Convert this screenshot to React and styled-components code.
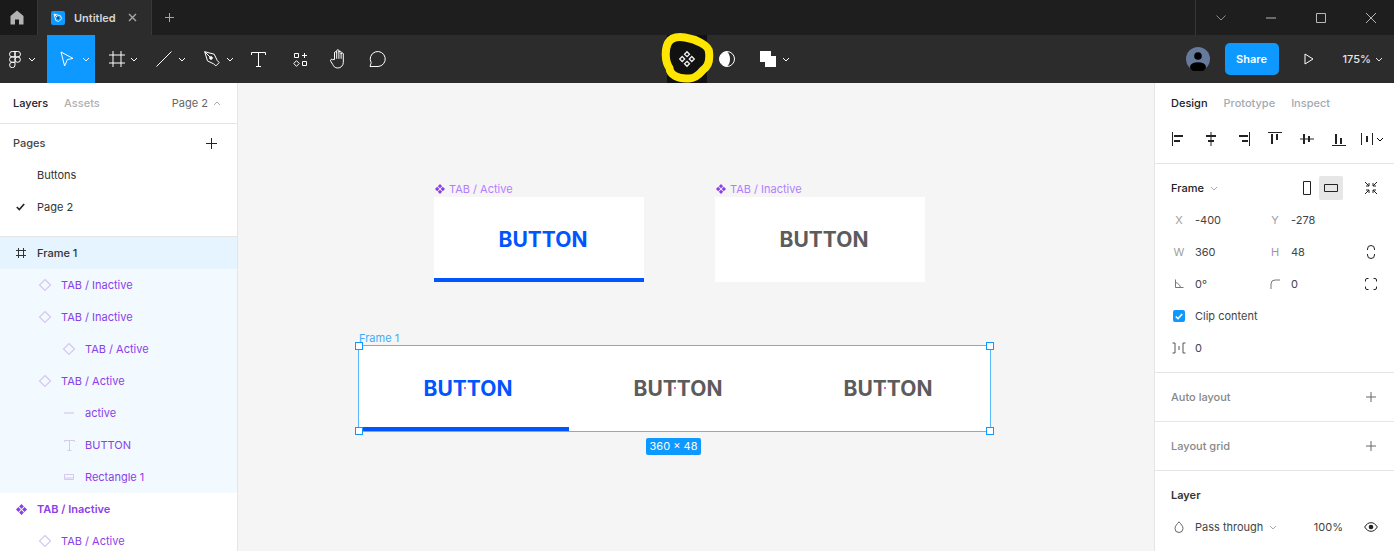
import styled, { createGlobalStyle } from "styled-components";

const GlobalStyle = createGlobalStyle`
  html, body {
    margin: 0;
    height: 100%;
    overflow: hidden;
    background: #f5f5f5;
    font-family: Inter, "Liberation Sans", sans-serif;
  }
  * { box-sizing: border-box; }
`;

// icons
const Svg = ({ s = 16, w, h, children, stroke = "currentColor", sw = 1 }) => (
  <svg
    width={w || s}
    height={h || s}
    viewBox={`0 0 ${w || s} ${h || s}`}
    fill="none"
    stroke={stroke}
    strokeWidth={sw}
    style={{ display: "block", flex: "none" }}
  >
    {children}
  </svg>
);

const Chevron = ({ up }) => (
  <Svg w={8} h={5}>
    <path d={up ? "M1 4l3-3 3 3" : "M1 1l3 3 3-3"} />
  </Svg>
);

const HomeIcon = () => (
  <svg width="14" height="15" viewBox="0 0 14 15" fill="#b3b3b3" style={{ display: "block" }}>
    <path d="M7 0.5L13.5 6V14.5H9V9.5H5V14.5H0.5V6Z" />
  </svg>
);

const FigmaIcon = () => (
  <Svg w={12} h={17}>
    <path d="M6 .5H3.2a2.7 2.7 0 000 5.4H6zM6 .5h2.8a2.7 2.7 0 010 5.4H6zM6 5.9H3.2a2.7 2.7 0 000 5.4H6zM6 8.6a2.7 2.7 0 115.4 0 2.7 2.7 0 01-5.4 0zM6 11.3H3.2A2.7 2.7 0 106 14z" />
  </Svg>
);

const MoveIcon = () => (
  <Svg w={14} h={16}>
    <path d="M1 1l12 6.4-5.6 1.2L4.6 15z" />
  </Svg>
);

const FrameIcon = ({ size = 16 }) => (
  <Svg s={size}>
    <path d={size === 16 ? "M4 0v16M12 0v16M0 4h16M0 12h16" : "M3.5 1v10M8.5 1v10M1 3.5h10M1 8.5h10"} />
  </Svg>
);

const LineIcon = () => (
  <Svg s={16}>
    <path d="M.5 15.5L15.5.5" />
  </Svg>
);

const PenIcon = () => (
  <Svg s={16}>
    <path d="M.7.7l9.5 2.5 3 6.2 2 2.2-3.3 3.3-2.2-2-6.2-3zM.7.7l5.6 5.6" />
    <circle cx="7" cy="7" r="1.3" fill="currentColor" />
  </Svg>
);

const TextIcon = ({ light }) => (
  <Svg s={light ? 11 : 15}>
    {light ? <path d="M.5 2V.5h10V2M5.5.5v10M3.5 10.5h4" /> : <path d="M.5 3V.5h14V3M7.5.5v14M5 14.5h5" />}
  </Svg>
);

const ResourcesIcon = () => (
  <Svg s={15}>
    <path d="M1.5 1.5h4v4h-4zM9.5 9.5h4v4h-4zM11.5 1v5M9 3.5h5M3.5 8.7l2.8 2.8-2.8 2.8-2.8-2.8z" />
  </Svg>
);

const HandIcon = () => (
  <Svg w={18} h={20}>
    <path d="M4.5 10.500V3.8a1.100 1.100 0 012.200 0V1.800a1.100 1.100 0 012.200 0v1.400a1.100 1.100 0 012.200 0V5a1.100 1.100 0 012.200 0v8.500a5.500 5.500 0 01-5.500 5.500c-3 0-4.300-1.700-5-3.500L.6 12a1.200 1.200 0 012-1.300zM6.700 3.800v6M8.900 2.500v7.300M11.100 4v5.800" />
  </Svg>
);

const CommentIcon = () => (
  <Svg s={18}>
    <path d="M1 16.500l1.200-3.800A7.500 7.500 0 119 16.500H1z" />
  </Svg>
);

const ComponentIcon = ({ color = "#f0f0f0" }) => (
  <Svg s={18} stroke={color} sw={1.3}>
    <path d="M9 1.700l2.500 2.500L9 6.700 6.500 4.200zM4.200 6.500l2.500 2.500-2.500 2.500L1.700 9zM13.800 6.500L16.300 9l-2.500 2.500L11.300 9zM9 11.300l2.500 2.500L9 16.300l-2.500-2.500z" />
  </Svg>
);

const SolidComponent = ({ size = 11, color = "#8a3fe8" }) => (
  <svg width={size} height={size} viewBox="0 0 11 11" fill={color} style={{ display: "block", flex: "none" }}>
    <path d="M5.5 0l2.400 2.400-2.400 2.400-2.400-2.400zM2.400 3.100l2.400 2.400-2.400 2.400L0 5.500zM8.600 3.100L11 5.500 8.600 7.900 6.200 5.500zM5.500 6.200l2.400 2.400L5.500 11 3.100 8.600z" />
  </svg>
);

const MaskIcon = () => (
  <svg width="16" height="16" viewBox="0 0 16 16" style={{ display: "block" }}>
    <circle cx="8" cy="8" r="7.5" fill="none" stroke="#fff" />
    <path d="M8 .5A7.500 7.500 0 008 15.500C10 13.500 11 11 11 8S10 2.500 8 .5z" fill="#fff" />
  </svg>
);

const BooleanIcon = () => (
  <svg width="16" height="16" viewBox="0 0 16 16" fill="#fff" style={{ display: "block" }}>
    <path d="M0 0h11v5h5v11H5v-5H0z" />
  </svg>
);

const AvatarIcon = () => (
  <svg width="24" height="24" viewBox="0 0 24 24" style={{ display: "block" }}>
    <circle cx="12" cy="12" r="12" fill="#667a9c" />
    <circle cx="12" cy="9" r="3.8" fill="#000" />
    <ellipse cx="12" cy="20" rx="8" ry="4.800" fill="#000" />
  </svg>
);

const PlayIcon = () => (
  <Svg w={10} h={12} stroke="#fff">
    <path d="M1 1v10l8-5z" />
  </Svg>
);

const Diamond = () => (
  <Svg s={14} stroke="#d6c8ef" sw={1.2}>
    <path d="M7 1.500L12.500 7 7 12.500 1.500 7z" />
  </Svg>
);

const LineLayer = () => (
  <Svg s={14} stroke="#d6c8ef" sw={1.2}>
    <path d="M2 7h10" />
  </Svg>
);

const RectLayer = () => (
  <Svg s={14} stroke="#d6c8ef" sw={1}>
    <path d="M2.500 4.500h9v5h-9z" />
    <path d="M2.500 8h9" />
  </Svg>
);

const PlusIcon = ({ color = "#333", size = 13 }) => (
  <Svg s={size} stroke={color}>
    <path d={`M${size / 2} 1v${size - 2}M1 ${size / 2}h${size - 2}`} />
  </Svg>
);

const Align = ({ line, bars }) => (
  <Svg s={14} stroke="#222">
    <path d={line} />
    <path d={bars} strokeWidth="2" />
  </Svg>
);

const alignIcons = [
  { line: "M.5 0v14", bars: "M2 4h9M2 9h6" },
  { line: "M7 0v14", bars: "M2 4h10M4 9h6" },
  { line: "M13.500 0v14", bars: "M3 4h9M6 9h6" },
  { line: "M0 .5h14", bars: "M4 2v10M9 2v6" },
  { line: "M0 7h14", bars: "M4 2v10M9 4v6" },
  { line: "M0 13.500h14", bars: "M4 2v10M9 6v6" },
];

// page structure
const App = () => (
  <Page>
    <GlobalStyle />
    <TabBar>
      <HomeTab>
        <HomeIcon />
      </HomeTab>
      <FileTab>
        <FileBadge>
          <svg width="12" height="12" viewBox="0 0 12 12" fill="none" stroke="#e8f5ff" strokeWidth="1">
            <path d="M2 2l6.500 1.800 1 3-2.700 2.700-3-1zM2 2l3.500 3.500" />
            <circle cx="6" cy="6" r="1" fill="#12324a" stroke="none" />
          </svg>
        </FileBadge>
        <FileName>Untitled</FileName>
        <CloseSlot>
          <Svg s={9} stroke="#a8a8a8" sw={1.4}>
            <path d="M1 1l7 7M8 1L1 8" />
          </Svg>
        </CloseSlot>
      </FileTab>
      <NewTab>
        <PlusIcon color="#a8a8a8" size={11} />
      </NewTab>
      <WindowControls>
        <WindowButton>
          <Svg w={10} h={6} stroke="#8c8c8c">
            <path d="M.5.5L5 5 9.500.5" />
          </Svg>
        </WindowButton>
        <WindowButton>
          <Svg w={10} h={2} stroke="#b8b8b8">
            <path d="M0 1h10" />
          </Svg>
        </WindowButton>
        <WindowButton>
          <Svg s={10} stroke="#b8b8b8">
            <path d="M.5.5h9v9h-9z" />
          </Svg>
        </WindowButton>
        <WindowButton>
          <Svg s={10} stroke="#b8b8b8">
            <path d="M0 0l10 10M10 0L0 10" />
          </Svg>
        </WindowButton>
      </WindowControls>
    </TabBar>

    <Toolbar>
      <ToolGroup>
        <MenuTool>
          <FigmaIcon />
          <Chevron />
        </MenuTool>
        <DropTool $active $gap={8}>
          <MoveIcon />
          <Chevron />
        </DropTool>
        <DropTool $pad={14} $gap={5}>
          <FrameIcon />
          <Chevron />
        </DropTool>
        <DropTool>
          <LineIcon />
          <Chevron />
        </DropTool>
        <DropTool>
          <PenIcon />
          <Chevron />
        </DropTool>
        <Tool $w={38}>
          <TextIcon />
        </Tool>
        <Tool $w={46}>
          <ResourcesIcon />
        </Tool>
        <Tool $w={32}>
          <HandIcon />
        </Tool>
        <Tool $w={46}>
          <CommentIcon />
        </Tool>
      </ToolGroup>

      <CenterTools>
        <ComponentTool>
          <Scribble width="54" height="52" viewBox="0 0 54 52">
            <path
              d="M24 4.500C34 6 48 12 48 19C49 27 48 33 42 37C37 43 33 46 27 45.500C17 46 9 42 8.500 35C3.500 28 4 16 7 10C10 4.500 17 3.500 24 4.500Z"
              fill="#111"
              stroke="#ffe600"
              strokeWidth="8"
              strokeLinejoin="round"
            />
          </Scribble>
          <ScribbleIcon>
            <ComponentIcon />
          </ScribbleIcon>
        </ComponentTool>
        <Tool $w={40}>
          <MaskIcon />
        </Tool>
        <BooleanTool>
          <BooleanIcon />
          <Chevron />
        </BooleanTool>
      </CenterTools>

      <RightTools>
        <AvatarIcon />
        <ShareButton>Share</ShareButton>
        <PlaySlot>
          <PlayIcon />
        </PlaySlot>
        <Zoom>
          175%
          <Chevron />
        </Zoom>
      </RightTools>
    </Toolbar>

    <Main>
      <LeftPanel>
        <PanelTabs>
          <PanelTab $on>Layers</PanelTab>
          <PanelTab>Assets</PanelTab>
          <PagePicker>
            Page 2
            <Chevron up />
          </PagePicker>
        </PanelTabs>
        <PagesBlock>
          <PagesHead>
            Pages
            <PlusIcon color="#222" />
          </PagesHead>
          <PageRow>
            <PageCheck />
            Buttons
          </PageRow>
          <PageRow>
            <PageCheck>
              <Svg w={9} h={8} stroke="#222" sw={1.6}>
                <path d="M.8 4l2.500 2.500L8.200 1" />
              </Svg>
            </PageCheck>
            Page 2
          </PageRow>
        </PagesBlock>
        <LayerList>
          <LayerRow $depth={0} $bg="#e5f4ff" $dark $weight={500}>
            <LayerIcon>
              <FrameIcon size={12} />
            </LayerIcon>
            Frame 1
          </LayerRow>
          {[
            ["TAB / Inactive", 1, <Diamond />],
            ["TAB / Inactive", 1, <Diamond />],
            ["TAB / Active", 2, <Diamond />],
            ["TAB / Active", 1, <Diamond />],
            ["active", 2, <LineLayer />],
            ["BUTTON", 2, <TextIcon light />],
            ["Rectangle 1", 2, <RectLayer />],
          ].map(([name, depth, icon], i) => (
            <LayerRow key={i} $depth={depth} $bg="#f2f9ff">
              <LayerIcon $muted>{icon}</LayerIcon>
              {name}
            </LayerRow>
          ))}
          <LayerRow $depth={0} $weight={600}>
            <LayerIcon>
              <SolidComponent />
            </LayerIcon>
            TAB / Inactive
          </LayerRow>
          <LayerRow $depth={1}>
            <LayerIcon>
              <Diamond />
            </LayerIcon>
            TAB / Active
          </LayerRow>
        </LayerList>
      </LeftPanel>

      <Canvas>
        <ComponentCard $left={196}>
          <CardLabel>
            <SolidComponent size={10} />
            TAB / Active
          </CardLabel>
          <ButtonCell $active>BUTTON</ButtonCell>
        </ComponentCard>
        <ComponentCard $left={477}>
          <CardLabel>
            <SolidComponent size={10} />
            TAB / Inactive
          </CardLabel>
          <ButtonCell>BUTTON</ButtonCell>
        </ComponentCard>

        <SelectedFrame>
          <FrameLabel>Frame 1</FrameLabel>
          <ButtonCell $active $inFrame>
            BUTTON
            <CenterDot />
          </ButtonCell>
          <ButtonCell $inFrame>
            BUTTON
            <CenterDot />
          </ButtonCell>
          <ButtonCell $inFrame>
            BUTTON
            <CenterDot />
          </ButtonCell>
          <Handle $x="left" $y="top" />
          <Handle $x="right" $y="top" />
          <Handle $x="left" $y="bottom" />
          <Handle $x="right" $y="bottom" />
          <SizeBadge>360 × 48</SizeBadge>
        </SelectedFrame>
      </Canvas>

      <RightPanel>
        <DesignTabs>
          <PanelTab $on>Design</PanelTab>
          <PanelTab $blueish>Prototype</PanelTab>
          <PanelTab $blueish>Inspect</PanelTab>
        </DesignTabs>
        <AlignRow>
          {alignIcons.map((icon, i) => (
            <AlignSlot key={i}>
              <Align line={icon.line} bars={icon.bars} />
            </AlignSlot>
          ))}
          <DistributeSlot>
            <Svg s={14} stroke="#222">
              <path d="M1.500 1v12M12.500 1v12" />
              <path d="M7 4v6" strokeWidth="2" />
            </Svg>
            <Chevron />
          </DistributeSlot>
        </AlignRow>
        <Section>
          <FrameRow>
            <FrameTitle>
              Frame
              <Chevron />
            </FrameTitle>
            <OrientSlot>
              <Svg w={8} h={14} stroke="#222">
                <path d="M.5.5h7v13h-7z" />
              </Svg>
            </OrientSlot>
            <OrientSlot $on>
              <Svg w={14} h={8} stroke="#222">
                <path d="M.5.5h13v7h-13z" />
              </Svg>
            </OrientSlot>
            <SideSlot $push>
              <Svg s={14} stroke="#222">
                <path d="M1 1l4 4M5 2v3H2M13 1L9 5M9 2v3h3M1 13l4-4M5 12V9H2M13 13L9 9M9 12V9h3" />
              </Svg>
            </SideSlot>
          </FrameRow>
          <FieldRow>
            <FieldTag>X</FieldTag>
            <FieldValue>-400</FieldValue>
            <FieldTag>Y</FieldTag>
            <FieldValue>-278</FieldValue>
          </FieldRow>
          <FieldRow>
            <FieldTag>W</FieldTag>
            <FieldValue>360</FieldValue>
            <FieldTag $pink>H</FieldTag>
            <FieldValue>48</FieldValue>
            <SideSlot>
              <Svg w={8} h={14} stroke="#222">
                <path d="M.5 5V4a3.500 3.500 0 017 0v1M.5 9v1a3.500 3.500 0 007 0V9" />
              </Svg>
            </SideSlot>
          </FieldRow>
          <FieldRow>
            <FieldTag>
              <Svg s={10} stroke="#777">
                <path d="M1.500.5v8h8M1.500 3.500C4 4 6 6 6.500 8.500" />
              </Svg>
            </FieldTag>
            <FieldValue>0°</FieldValue>
            <FieldTag>
              <Svg s={10} stroke="#777">
                <path d="M1 10V5a4 4 0 014-4h5" />
              </Svg>
            </FieldTag>
            <FieldValue>0</FieldValue>
            <SideSlot>
              <Svg s={12} stroke="#222">
                <path d="M.5 3.500V2A1.500 1.500 0 012 .5h1.500M8.500.5H10A1.500 1.500 0 0111.500 2v1.500M11.500 8.500V10a1.500 1.500 0 01-1.500 1.500H8.500M3.500 11.500H2A1.500 1.500 0 01.5 10V8.500" />
              </Svg>
            </SideSlot>
          </FieldRow>
          <FieldRow>
            <FieldTag>
              <Checkbox>
                <Svg w={8} h={7} stroke="#fff" sw={1.6}>
                  <path d="M.8 3.500l2.200 2.200L7.200 1" />
                </Svg>
              </Checkbox>
            </FieldTag>
            <ClipLabel>Clip content</ClipLabel>
          </FieldRow>
          <FieldRow>
            <FieldTag>
              <Svg w={14} h={12} stroke="#555">
                <path d="M.5 1H3v10H.5M13.500 1H11v10h2.500M7 4v4" />
              </Svg>
            </FieldTag>
            <FieldValue>0</FieldValue>
          </FieldRow>
        </Section>
        <AddSection>
          <AddTitle>Auto layout</AddTitle>
          <PlusIcon color="#666" size={12} />
        </AddSection>
        <AddSection>
          <AddTitle>Layout grid</AddTitle>
          <PlusIcon color="#666" size={12} />
        </AddSection>
        <LayerTitle>Layer</LayerTitle>
        <FieldRow>
          <FieldTag>
            <Svg w={10} h={12} stroke="#666">
              <path d="M5 .8C7 3.200 9 5 9 7.500a4 4 0 01-8 0C1 5 3 3.200 5 .8z" />
            </Svg>
          </FieldTag>
          <BlendMode>
            Pass through
            <Chevron />
          </BlendMode>
          <Opacity>100%</Opacity>
          <SideSlot>
            <Svg w={14} h={10} stroke="#222">
              <path d="M.7 5C2.500 2 4.500.7 7 .7S11.500 2 13.300 5C11.500 8 9.500 9.300 7 9.300S2.500 8 .7 5z" />
              <circle cx="7" cy="5" r="2.300" fill="#222" stroke="none" />
            </Svg>
          </SideSlot>
        </FieldRow>
      </RightPanel>
    </Main>
  </Page>
);

export default App;

const Page = styled.div`
  display: flex;
  flex-direction: column;
  width: 100vw;
  height: 100vh;
  overflow: hidden;
`;

// title bar
const TabBar = styled.div`
  display: flex;
  align-items: stretch;
  height: 35px;
  background: #1e1e1e;
  color: #b3b3b3;
`;

const HomeTab = styled.div`
  display: flex;
  align-items: center;
  justify-content: center;
  width: 37px;
  padding-right: 4px;
  background: #1a1a1a;
`;

const FileTab = styled.div`
  display: flex;
  align-items: center;
  width: 115px;
  padding-left: 13px;
  background: #2c2c2c;
  border-left: 1px solid #383838;
  border-right: 1px solid #383838;
`;

const FileBadge = styled.div`
  display: flex;
  align-items: center;
  justify-content: center;
  width: 14px;
  height: 14px;
  border-radius: 2px;
  background: #0d99ff;
`;

const FileName = styled.span`
  margin-left: 9px;
  font-size: 11px;
  font-weight: 600;
  color: #d6d6d6;
`;

const CloseSlot = styled.span`
  margin-left: 12px;
`;

const NewTab = styled.div`
  display: flex;
  align-items: center;
  margin-left: 12px;
`;

const WindowControls = styled.div`
  display: flex;
  margin-left: auto;
  margin-right: -2px;
  border-left: 1px solid #383838;
`;

const WindowButton = styled.div`
  display: flex;
  align-items: center;
  justify-content: center;
  width: 50px;
`;

// toolbar
const Toolbar = styled.div`
  display: flex;
  align-items: stretch;
  justify-content: space-between;
  position: relative;
  height: 48px;
  background: #2c2c2c;
  color: #fff;
`;

const ToolGroup = styled.div`
  display: flex;
  align-items: stretch;
`;

const Tool = styled.div`
  display: flex;
  align-items: center;
  justify-content: center;
  width: ${(p) => p.$w}px;
`;

const MenuTool = styled.div`
  display: flex;
  align-items: center;
  gap: 7px;
  width: 47px;
  padding-left: 9px;
`;

const DropTool = styled.div`
  display: flex;
  align-items: center;
  gap: ${(p) => p.$gap || 6}px;
  width: 48px;
  padding-left: ${(p) => p.$pad || 13}px;
  background: ${(p) => (p.$active ? "#0d99ff" : "transparent")};
`;

const CenterTools = styled.div`
  display: flex;
  align-items: stretch;
  position: absolute;
  left: 667px;
  top: 0;
  height: 48px;
`;

const ComponentTool = styled.div`
  display: flex;
  align-items: center;
  justify-content: center;
  position: relative;
  width: 40px;
  background: #111;
`;

const Scribble = styled.svg`
  position: absolute;
  left: -6px;
  top: -2px;
`;

const ScribbleIcon = styled.div`
  position: absolute;
  left: 11px;
  top: 15px;
`;

const BooleanTool = styled.div`
  display: flex;
  align-items: center;
  gap: 6px;
  padding-left: 13px;
`;

const RightTools = styled.div`
  display: flex;
  align-items: center;
  padding-right: 11px;
`;

const ShareButton = styled.div`
  display: flex;
  align-items: center;
  justify-content: center;
  width: 54px;
  height: 32px;
  margin-left: 15px;
  border-radius: 5px;
  background: #0d99ff;
  font-size: 11px;
  font-weight: 600;
`;

const PlaySlot = styled.div`
  display: flex;
  justify-content: center;
  width: 60px;
  margin-right: 4px;
`;

const Zoom = styled.div`
  display: flex;
  align-items: center;
  gap: 4px;
  font-size: 11px;
  font-weight: 500;
  color: #e6e6e6;
`;

// main area
const Main = styled.div`
  display: flex;
  flex: 1;
  min-height: 0;
  overflow: hidden;
`;

const LeftPanel = styled.aside`
  flex: none;
  width: 238px;
  background: #fff;
  border-right: 1px solid #e5e5e5;
  overflow: hidden;
`;

const PanelTabs = styled.div`
  display: flex;
  align-items: center;
  gap: 16px;
  height: 41px;
  padding: 0 16px 0 13px;
  border-bottom: 1px solid #e5e5e5;
`;

const PanelTab = styled.span`
  font-size: 11px;
  font-weight: 500;
  color: ${(p) => (p.$on ? "#222" : p.$blueish ? "#a4aab3" : "#b0b0b0")};
`;

const PagePicker = styled.div`
  display: flex;
  align-items: center;
  gap: 5px;
  margin-left: auto;
  font-size: 11px;
  color: #666;
  svg {
    color: #aaa;
  }
`;

const PagesBlock = styled.div`
  height: 113px;
  padding-top: 3px;
  border-bottom: 1px solid #e5e5e5;
`;

const PagesHead = styled.div`
  display: flex;
  align-items: center;
  justify-content: space-between;
  height: 32px;
  padding: 0 19px 0 13px;
  font-size: 11px;
  font-weight: 500;
  color: #444;
`;

const PageRow = styled.div`
  display: flex;
  align-items: center;
  height: 32px;
  font-size: 11px;
  color: #333;
`;

const PageCheck = styled.div`
  display: flex;
  justify-content: center;
  width: 37px;
  padding-left: 12px;
  padding-right: 8px;
`;

const LayerList = styled.div`
  display: flex;
  flex-direction: column;
`;

const LayerRow = styled.div`
  display: flex;
  flex: none;
  align-items: center;
  height: 32px;
  padding-left: ${(p) => 13 + p.$depth * 24}px;
  background: ${(p) => p.$bg || "transparent"};
  font-size: 11px;
  font-weight: ${(p) => p.$weight || 400};
  color: ${(p) => (p.$dark ? "#333" : "#8a3fe8")};
`;

const LayerIcon = styled.div`
  display: flex;
  align-items: center;
  justify-content: center;
  width: 16px;
  margin-right: 8px;
  color: ${(p) => (p.$muted ? "#d6c8ef" : "inherit")};
`;

// canvas
const Canvas = styled.main`
  position: relative;
  flex: 1;
  background: #f5f5f5;
`;

const ComponentCard = styled.div`
  position: absolute;
  left: ${(p) => p.$left}px;
  top: 114px;
  display: flex;
  width: 210px;
  height: 85px;
  background: #fff;
`;

const CardLabel = styled.div`
  position: absolute;
  left: 1px;
  top: -15px;
  display: flex;
  align-items: center;
  gap: 4px;
  font-size: 11px;
  color: #b27eff;
`;

const ButtonCell = styled.div`
  position: relative;
  display: flex;
  flex: ${(p) => (p.$inFrame ? "none" : "1")};
  align-items: center;
  justify-content: center;
  width: ${(p) => (p.$inFrame ? "210px" : "auto")};
  padding-left: 8px;
  font-size: 21px;
  font-weight: 700;
  color: ${(p) => (p.$active ? "#0055ff" : "#5c5c5c")};
  box-shadow: ${(p) => (p.$active ? "inset 0 -4px 0 #0055ff" : "none")};
`;

const SelectedFrame = styled.div`
  position: absolute;
  left: 121px;
  top: 263px;
  display: flex;
  width: 631px;
  height: 85px;
  background: #fff;
  box-shadow: 0 0 0 1px #5ab8fa;
`;

const CenterDot = styled.i`
  position: absolute;
  left: 105px;
  top: 41px;
  width: 2px;
  height: 2px;
  background: #f24ee0;
`;

const FrameLabel = styled.span`
  position: absolute;
  left: 0;
  top: -15px;
  font-size: 11px;
  color: #45acf7;
`;

const Handle = styled.span`
  position: absolute;
  ${(p) => p.$x}: -4px;
  ${(p) => p.$y}: -4px;
  width: 8px;
  height: 8px;
  background: #fff;
  border: 1px solid #0d99ff;
`;

const SizeBadge = styled.div`
  position: absolute;
  left: 287px;
  top: 92px;
  width: 55px;
  height: 17px;
  border-radius: 2px;
  background: #0d99ff;
  color: #fff;
  font-size: 11px;
  line-height: 17px;
  text-align: center;
`;

// right panel
const RightPanel = styled.aside`
  flex: none;
  width: 240px;
  background: #fff;
  border-left: 1px solid #e5e5e5;
  overflow: hidden;
`;

const DesignTabs = styled.div`
  display: flex;
  align-items: center;
  gap: 16px;
  height: 40px;
  padding-left: 16px;
`;

const AlignRow = styled.div`
  display: flex;
  align-items: center;
  height: 41px;
  padding: 0 0 8px 16px;
  border-bottom: 1px solid #e5e5e5;
`;

const AlignSlot = styled.div`
  display: flex;
  justify-content: center;
  width: 16px;
  margin-right: 16px;
`;

const DistributeSlot = styled.div`
  display: flex;
  align-items: center;
  gap: 2px;
  margin-left: -3px;
`;

const Section = styled.section`
  height: 209px;
  padding-top: 8px;
  border-bottom: 1px solid #e5e5e5;
`;

const FrameRow = styled.div`
  display: flex;
  align-items: center;
  height: 32px;
  padding-left: 16px;
`;

const FrameTitle = styled.div`
  display: flex;
  align-items: center;
  gap: 6px;
  width: 124px;
  font-size: 11px;
  font-weight: 500;
  color: #222;
  svg {
    color: #aaa;
  }
`;

const OrientSlot = styled.div`
  display: flex;
  align-items: center;
  justify-content: center;
  width: 24px;
  height: 24px;
  border-radius: 2px;
  background: ${(p) => (p.$on ? "#e6e6e6" : "transparent")};
`;

const SideSlot = styled.div`
  display: flex;
  justify-content: center;
  width: 16px;
  margin-left: ${(p) => (p.$push ? "20px" : "0")};
  grid-column: 5;
`;

const FieldRow = styled.div`
  display: grid;
  grid-template-columns: 24px 72px 24px 72px 16px;
  align-items: center;
  height: 32px;
  padding-left: 16px;
  font-size: 11px;
  color: #444;
`;

const FieldTag = styled.div`
  display: flex;
  justify-content: center;
  padding-right: 8px;
  color: ${(p) => (p.$pink ? "#a98fb0" : "#a0a0a0")};
`;

const FieldValue = styled.span`
  color: #444;
`;

const Checkbox = styled.div`
  display: flex;
  align-items: center;
  justify-content: center;
  width: 12px;
  height: 12px;
  border-radius: 2px;
  background: #0d99ff;
`;

const ClipLabel = styled.span`
  grid-column: 2 / 5;
  color: #444;
`;

const AddSection = styled.section`
  display: flex;
  align-items: center;
  justify-content: space-between;
  height: 49px;
  padding: 0 17px 0 16px;
  border-bottom: 1px solid #e5e5e5;
`;

const AddTitle = styled.span`
  font-size: 11px;
  font-weight: 500;
  color: #888;
`;

const LayerTitle = styled.div`
  display: flex;
  align-items: center;
  height: 40px;
  padding: 8px 0 0 16px;
  font-size: 11px;
  font-weight: 600;
  color: #333;
`;

const BlendMode = styled.div`
  display: flex;
  align-items: center;
  gap: 6px;
  grid-column: 2 / 4;
  svg {
    color: #aaa;
  }
`;

const Opacity = styled.span`
  padding-right: 20px;
  text-align: right;
`;
